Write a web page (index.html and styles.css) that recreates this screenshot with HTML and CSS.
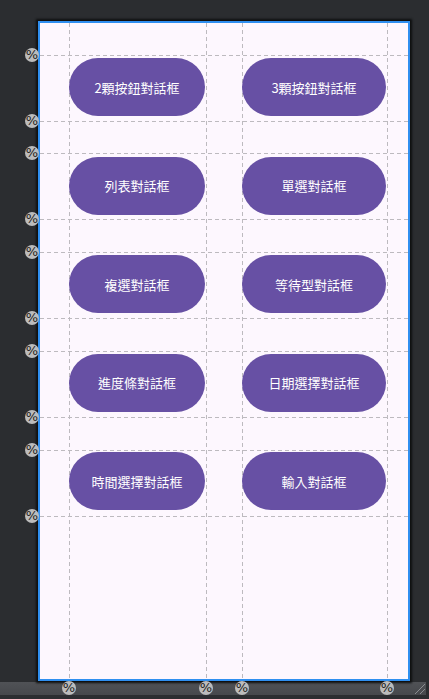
FILE: index.html
```html
<!DOCTYPE html>
<html lang="zh-Hant">
<head>
    <meta charset="UTF-8">
    <meta name="viewport" content="width=device-width, initial-scale=1.0">
    <title>Dialog Demo - Layout Editor</title>
    <link rel="stylesheet" href="styles.css">
</head>
<body>

<div class="workspace">
    <div class="device">
        <!-- guidelines -->
        <div class="guide-v" style="left: 29px"></div>
        <div class="guide-v" style="left: 166px"></div>
        <div class="guide-v" style="left: 202px"></div>
        <div class="guide-v" style="left: 347px"></div>

        <div class="guide-h" style="top: 32px"></div>
        <div class="guide-h" style="top: 98px"></div>
        <div class="guide-h" style="top: 130px"></div>
        <div class="guide-h" style="top: 196px"></div>
        <div class="guide-h" style="top: 229px"></div>
        <div class="guide-h" style="top: 295px"></div>
        <div class="guide-h" style="top: 328px"></div>
        <div class="guide-h" style="top: 394px"></div>
        <div class="guide-h" style="top: 427px"></div>
        <div class="guide-h" style="top: 493px"></div>

        <div class="buttons">
            <button class="btn">2顆按鈕對話框</button>
            <button class="btn">3顆按鈕對話框</button>
            <button class="btn">列表對話框</button>
            <button class="btn">單選對話框</button>
            <button class="btn">複選對話框</button>
            <button class="btn">等待型對話框</button>
            <button class="btn">進度條對話框</button>
            <button class="btn">日期選擇對話框</button>
            <button class="btn">時間選擇對話框</button>
            <button class="btn">輸入對話框</button>
        </div>
    </div>

    <div class="scrollbar"></div>

    <!-- percent badges -->
    <span class="badge" style="left: 25px; top: 48px">%</span>
    <span class="badge" style="left: 25px; top: 114px">%</span>
    <span class="badge" style="left: 25px; top: 146px">%</span>
    <span class="badge" style="left: 25px; top: 212px">%</span>
    <span class="badge" style="left: 25px; top: 245px">%</span>
    <span class="badge" style="left: 25px; top: 311px">%</span>
    <span class="badge" style="left: 25px; top: 344px">%</span>
    <span class="badge" style="left: 25px; top: 410px">%</span>
    <span class="badge" style="left: 25px; top: 443px">%</span>
    <span class="badge" style="left: 25px; top: 509px">%</span>

    <span class="badge" style="left: 62px; top: 681px">%</span>
    <span class="badge" style="left: 199px; top: 681px">%</span>
    <span class="badge" style="left: 235px; top: 681px">%</span>
    <span class="badge" style="left: 380px; top: 681px">%</span>

    <svg class="grip" width="12" height="12" viewBox="0 0 12 12">
        <path d="M1 11 L11 1 M6 11 L11 6" stroke="#8a8c90" stroke-width="1" fill="none"/>
    </svg>
</div>

</body>
</html>
```

FILE: styles.css
```css
body {
    margin: 0;
    padding: 0;
    background-color: #2b2d30;
    font-family: "Noto Sans CJK TC", "Noto Sans", sans-serif;
}
.workspace {
    position: relative;
    width: 429px;
    height: 699px;
    padding-top: 21px;
    box-sizing: border-box;
    overflow: hidden;
}
.device {
    position: relative;
    margin-left: 38px;
    width: 368px;
    height: 656px;
    background: #fdf7fe;
    border: 2px solid #2f8ff0;
    box-shadow: 0 0 2px 2px #0e0f10;
}
.guide-v {
    position: absolute;
    top: 0;
    bottom: 0;
    width: 1px;
    background: repeating-linear-gradient(to bottom, #bdbabf 0 4px, transparent 4px 7px);
}
.guide-h {
    position: absolute;
    left: 0;
    right: 0;
    height: 1px;
    background: repeating-linear-gradient(to right, #bdbabf 0 4px, transparent 4px 7px);
}
.buttons {
    position: relative;
    display: grid;
    grid-template-columns: 136px 144px;
    grid-auto-rows: 58px;
    column-gap: 37px;
    row-gap: 40.5px;
    padding-left: 29px;
    padding-top: 35px;
}
.btn {
    border: none;
    border-radius: 29px;
    background: #6750a4;
    color: #ffffff;
    font-family: "Noto Sans CJK TC", "Noto Sans", sans-serif;
    font-size: 13px;
    padding: 0;
    cursor: pointer;
}
.scrollbar {
    margin-top: 1px;
    height: 13px;
    width: 426px;
    background: linear-gradient(to bottom, #505256, #46484c);
}
.badge {
    position: absolute;
    width: 14px;
    height: 14px;
    border-radius: 50%;
    background: #bcbcbc;
    color: #1e1f22;
    font-family: "DejaVu Sans", sans-serif;
    font-size: 13px;
    line-height: 14px;
    text-align: center;
}
.grip {
    position: absolute;
    left: 414px;
    top: 683px;
}
```
